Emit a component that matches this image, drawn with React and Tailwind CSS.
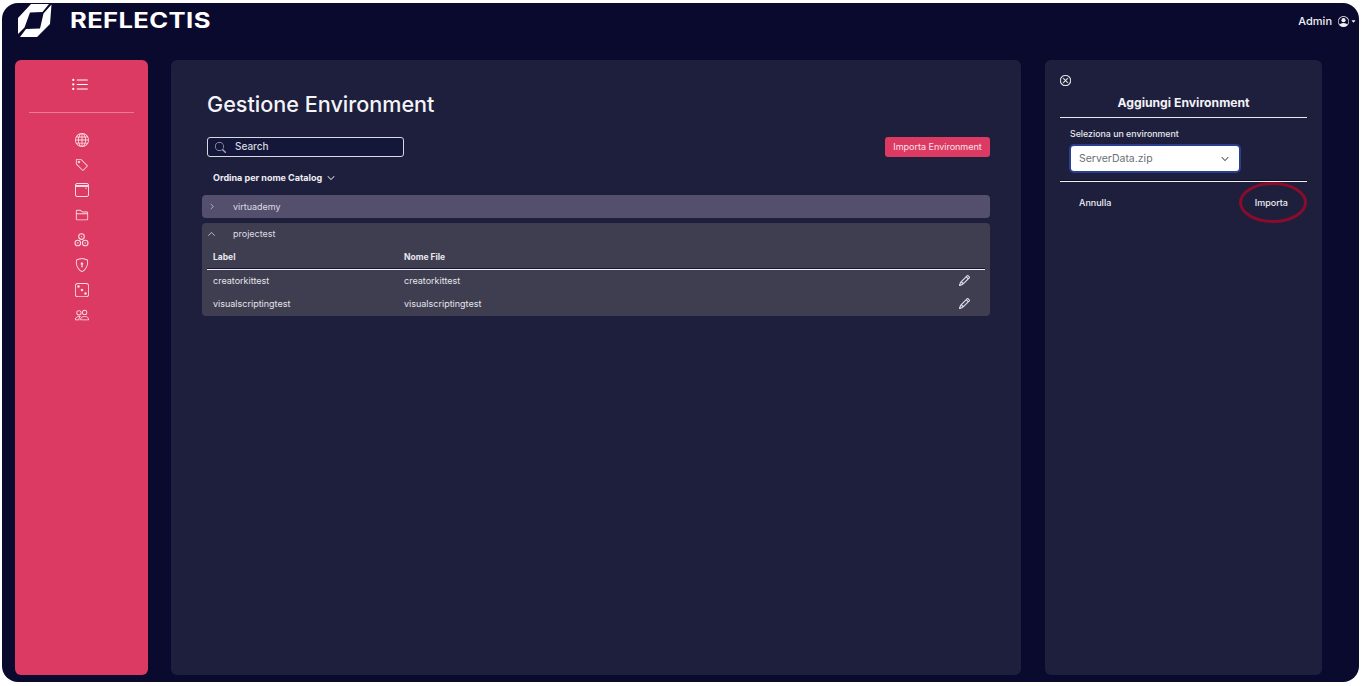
import React from 'react';
import {
  BsListUl, BsGlobe, BsTag, BsFolder2, BsShieldLock, BsDice3, BsPeople, BsSearch,
  BsChevronDown, BsChevronRight, BsChevronUp, BsPencil, BsXCircle, BsPersonCircle, BsCaretDownFill,
} from 'react-icons/bs';

function Logo() {
  return (
    <svg width="36" height="35" viewBox="0 0 36 35" fill="white">
      <path d="M1 15 L14 1 L32 1 L25.5 9 L13 9.5 L7.5 24.5 L1 31 Z" />
      <path d="M34.5 1.5 L33 21 L20 34 L3 34 L9 26 L23 25.5 L26.5 10.5 Z" />
    </svg>
  );
}

function WindowIcon() {
  return (
    <svg width="14" height="14" viewBox="0 0 14 14" fill="none" stroke="currentColor">
      <rect x="0.5" y="0.5" width="13" height="13" rx="1.5" />
      <path d="M0.5 3 H13.5" strokeWidth="2" />
      <circle cx="11" cy="5.2" r="0.7" fill="currentColor" stroke="none" />
    </svg>
  );
}

function ClusterIcon() {
  return (
    <svg width="15" height="14" viewBox="0 0 15 14" fill="none" stroke="currentColor" strokeWidth="1.1">
      <circle cx="7.5" cy="3.6" r="2.8" />
      <circle cx="3.8" cy="10" r="2.8" />
      <circle cx="11.2" cy="10" r="2.8" />
      <circle cx="7.5" cy="3.6" r="0.7" fill="currentColor" stroke="none" />
      <circle cx="3.8" cy="10" r="0.7" fill="currentColor" stroke="none" />
      <circle cx="11.2" cy="10" r="0.7" fill="currentColor" stroke="none" />
    </svg>
  );
}

function Sidebar() {
  return (
    <aside className="w-[133px] shrink-0 rounded-md bg-[#dc3a63] text-white flex flex-col items-center">
      <div className="h-[53px] w-[105px] border-b border-[#ea7b96] flex justify-center pt-[16px] pr-[4px]">
        <BsListUl size={18} />
      </div>
      <div className="mt-[20px] flex flex-col items-center gap-[11px] text-[#fbdbe3]">
        <BsGlobe size={14} />
        <BsTag size={14} />
        <WindowIcon />
        <BsFolder2 size={14} />
        <ClusterIcon />
        <BsShieldLock size={14} />
        <BsDice3 size={14} />
        <BsPeople size={14} />
      </div>
    </aside>
  );
}

function TableRow({ label, file }) {
  return (
    <div className="h-[23px] pb-[1px] flex items-center text-[9px] text-[#e4e4ea]">
      <span className="w-[202px] pl-[11px] shrink-0">{label}</span>
      <span className="flex-1">{file}</span>
      <BsPencil size={11} strokeWidth={0.6} stroke="currentColor" className="mr-[20px] mb-[2px] text-[#e8ecff]" />
    </div>
  );
}

function MainPanel() {
  return (
    <main className="w-[850px] shrink-0 rounded-md bg-[#1e1f3d] px-[31px] text-white">
      <h1 className="mt-[30px] ml-[5px] text-[21.6px] leading-[28px] font-medium text-[#f4f4f8]">Gestione Environment</h1>
      <div className="mt-[19px] flex items-center justify-between">
        <div className="ml-[5px] w-[197px] h-[20px] rounded-[3px] border border-[#d8d8e0] bg-[#14163a] flex items-center pl-[7px] gap-[9px]">
          <BsSearch size={11} className="text-[#a9aabb]" />
          <span className="pb-[1px] text-[10px] font-medium text-[#d6d6de]">Search</span>
        </div>
        <button className="w-[105px] h-[20px] rounded-[3px] bg-[#dc3a63] text-[9px] text-[#fbe4ea]">Importa Environment</button>
      </div>
      <div className="mt-[14px] ml-[11px] flex items-center gap-[5px] text-[9px] font-bold text-[#eeeef2] h-[14px]">
        Ordina per nome Catalog
        <BsChevronDown size={8} strokeWidth={0.6} />
      </div>
      <div className="mt-[10px] h-[23px] rounded-sm bg-[#544f6d] flex items-center text-[9px] text-[#dedde6]">
        <BsChevronRight size={7} className="ml-[6px] w-[8px]" />
        <span className="ml-[17px]">virtuademy</span>
      </div>
      <div className="mt-[5px] rounded-sm bg-[#3e3e50]">
        <div className="h-[22px] flex items-center text-[9px] text-[#dedde6]">
          <BsChevronUp size={8} className="ml-[5px] w-[9px]" />
          <span className="ml-[17px]">projectest</span>
        </div>
        <div className="h-[24px] flex items-center text-[8.5px] font-bold text-[#e8e8ee]">
          <span className="w-[202px] pl-[11px] shrink-0">Label</span>
          <span>Nome File</span>
        </div>
        <div className="mx-[5px] h-px bg-[#f0f0f4] shadow-[0_-1px_0_#15153a]" />
        <TableRow label="creatorkittest" file="creatorkittest" />
        <TableRow label="visualscriptingtest" file="visualscriptingtest" />
      </div>
    </main>
  );
}

function SidePanel() {
  return (
    <section className="relative w-[277px] shrink-0 rounded-md bg-[#1e1f3d] px-[15px] text-white">
      <BsXCircle size={11} strokeWidth={0.5} stroke="currentColor" className="mt-[15px] text-white" />
      <h2 className="mt-[9px] h-[22px] text-center text-[12.2px] font-bold text-[#f2f2f6] leading-[16px]">Aggiungi Environment</h2>
      <div className="h-px bg-[#e8e8ee]" />
      <div className="mt-[10px] ml-[10px] text-[8.8px] font-medium leading-[12px] text-[#e8e8ee]">Seleziona un environment</div>
      <div className="mt-[6px] ml-[11px] w-[168px] h-[25px] rounded-[3px] bg-white shadow-[0_0_0_2px_#2a3f8f] flex items-center justify-between pl-[8px] pr-[10px] text-[10.5px] text-[#6d6f78]">
        ServerData.zip
        <BsChevronDown size={8} strokeWidth={0.6} stroke="currentColor" className="text-[#33343c]" />
      </div>
      <div className="mt-[10px] h-px bg-[#f0f0f4] shadow-[0_-1px_0_#0d0d24]" />
      <div className="mt-[15px] flex justify-between px-[19px] text-[9px] font-medium leading-[12px] text-[#eeeef2]">
        <span>Annulla</span>
        <span>Importa</span>
      </div>
      <div className="absolute left-[194px] top-[122px] w-[68px] h-[41px] rounded-[50%] border-[3px] border-[#8c0b2b]" />
    </section>
  );
}

export default function App() {
  return (
    <div className="w-[1361px] h-[686px] bg-white pt-[3px] px-[2px] pb-[4px] overflow-hidden font-['Inter','Liberation_Sans',sans-serif]">
      <div className="h-full rounded-[16px] bg-[#0a0a2e] flex flex-col">
        <header className="h-[57px] shrink-0 flex items-start justify-between text-white">
          <div className="flex items-center pl-[15px]">
            <Logo />
            <span className="ml-[17px] text-[21px] font-bold tracking-[0.3px] leading-[35px] scale-x-[1.22] origin-left">REFLECTIS</span>
          </div>
          <div className="flex items-center pt-[10px] pr-[3px] text-[11px] font-medium text-[#f0f0f4]">
            <span className="mr-[1px]">Admin</span>
            <BsPersonCircle size={11} className="ml-[5px]" />
            <BsCaretDownFill size={5} className="ml-[2px]" />
          </div>
        </header>
        <div className="flex flex-1 gap-[23px] pl-[13px] pb-[7px] min-h-0">
          <Sidebar />
          <MainPanel />
          <div className="ml-px flex">
            <SidePanel />
          </div>
        </div>
      </div>
    </div>
  );
}
